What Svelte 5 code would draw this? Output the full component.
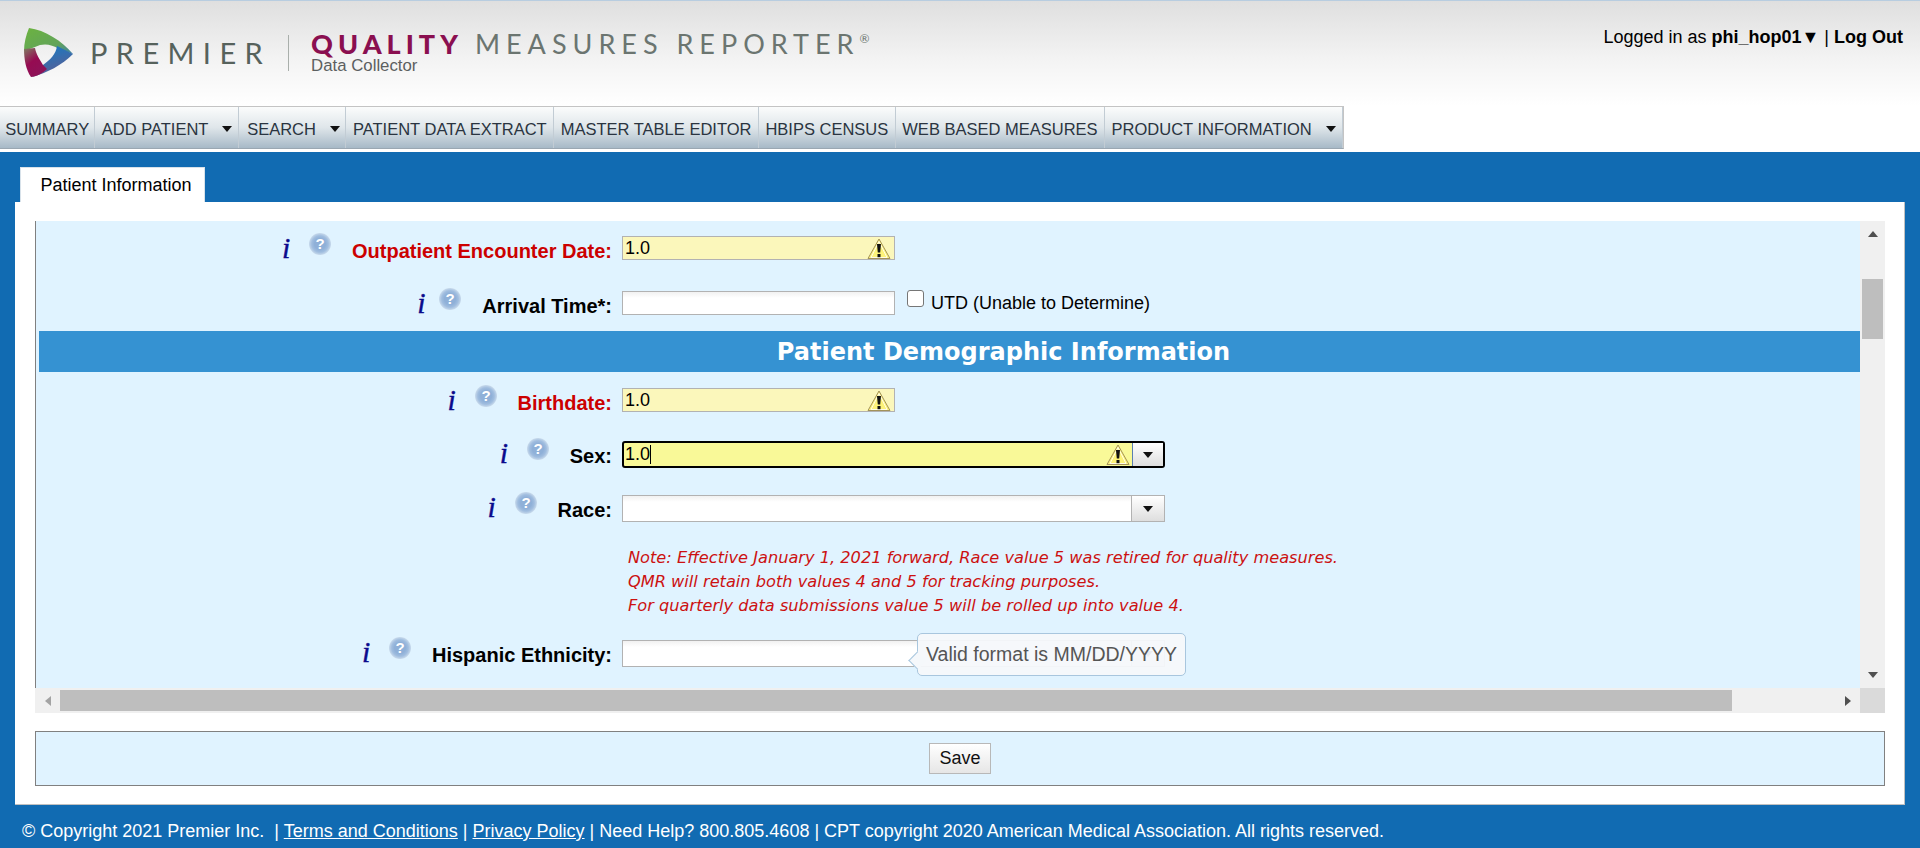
<script lang="ts">
	const menu = [
		{ label: 'SUMMARY', caret: false },
		{ label: 'ADD PATIENT', caret: true },
		{ label: 'SEARCH', caret: true },
		{ label: 'PATIENT DATA EXTRACT', caret: false },
		{ label: 'MASTER TABLE EDITOR', caret: false },
		{ label: 'HBIPS CENSUS', caret: false },
		{ label: 'WEB BASED MEASURES', caret: false },
		{ label: 'PRODUCT INFORMATION', caret: true }
	];
</script>

{#snippet warn()}
	<svg class="warn" width="24" height="21" viewBox="0 0 24 21" aria-hidden="true">
		<path d="M12 1 L23 20.5 H1 Z" fill="#fdf37a" stroke="#a3925a" stroke-width="1" />
		<path d="M12 3.5 L20 19.5 H4 Z" fill="none" stroke="#fffde8" stroke-width="1" />
		<path d="M10 6 H14 L13.2 14.5 H10.8 Z" fill="#111" />
		<rect x="10.5" y="16" width="3" height="3.2" fill="#111" />
	</svg>
{/snippet}

{#snippet labelCell(text, required, tight = false)}
	<div class="label-cell">
		<span class="info" class:tight>i</span>
		<svg class="help" width="22" height="22" viewBox="0 0 22 22" aria-hidden="true">
			<defs>
				<radialGradient id="helpRing">
					<stop offset="0.5" stop-color="#8fb0d8" />
					<stop offset="0.75" stop-color="#a0bddf" />
					<stop offset="1" stop-color="#c8daec" />
				</radialGradient>
			</defs>
			<circle cx="11" cy="11" r="11" fill="url(#helpRing)" />
			<text x="11" y="16" text-anchor="middle" class="help-mark">?</text>
		</svg>
		<label class:required>{text}</label>
	</div>
{/snippet}

{#snippet combo()}
	<span class="combo-btn"><i class="caret"></i></span>
{/snippet}

<div class="page">
	<header class="top">
		<div class="logo">
			<svg class="mark" width="52" height="54" viewBox="0 0 52 54" aria-hidden="true">
				<defs>
					<linearGradient id="gGreen" x1="0" y1="0" x2="1" y2="1">
						<stop offset="0" stop-color="#6cb33f" />
						<stop offset="0.65" stop-color="#62a45a" />
						<stop offset="1" stop-color="#3f7fa8" />
					</linearGradient>
					<linearGradient id="gBlue" x1="0" y1="0" x2="0.4" y2="1">
						<stop offset="0" stop-color="#0f7cc8" />
						<stop offset="1" stop-color="#5a5f95" />
					</linearGradient>
					<linearGradient id="gRed" x1="0" y1="0" x2="0.6" y2="1">
						<stop offset="0" stop-color="#7f7f62" />
						<stop offset="0.5" stop-color="#960b52" />
						<stop offset="1" stop-color="#8c1358" />
					</linearGradient>
				</defs>
				<path d="M6 1 C22 3 39 14 50 27 L36 22 C28 17 20 16 12 20 L1 24 C1 16 3 8 6 1 Z" fill="url(#gGreen)" />
				<path d="M50 27 C39 38 24 46 9 50 L20 38 C27 33 33 27 34 19 Z" fill="url(#gBlue)" />
				<path d="M1 22 C1 32 3 43 8 50 C13 50 20 46 24 42 L20 38 C17 33 13 27 12 21 Z" fill="url(#gRed)" />
			</svg>
			<span class="premier">PREMIER</span>
			<span class="divider"></span>
			<div class="product">
				<div class="product-name">
					<span class="quality">QUALITY</span>
					<span class="measures">MEASURES REPORTER<sup>®</sup></span>
				</div>
				<span class="collector">Data Collector</span>
			</div>
		</div>
		<div class="user">
			Logged in as <b>phi_hop01▼</b> | <b>Log Out</b>
		</div>
	</header>

	<nav class="menu">
		{#each menu as item}
			<span class="menu-item">
				{item.label}
				{#if item.caret}<i class="caret menu-caret"></i>{/if}
			</span>
		{/each}
	</nav>

	<main class="main">
		<div class="tab">Patient Information</div>
		<section class="panel">
			<div class="scroller">
				<div class="form">
					<div class="row gap-31">
						{@render labelCell('Outpatient Encounter Date:', true)}
						<div class="field warned short">1.0{@render warn()}</div>
					</div>
					<div class="row gap-16">
						{@render labelCell('Arrival Time*:', false, true)}
						<div class="with-check">
							<div class="field short"></div>
							<span class="check"></span>
							<span class="utd">UTD (Unable to Determine)</span>
						</div>
					</div>
					<h2 class="band">Patient Demographic Information</h2>
					<div class="row gap-29">
						{@render labelCell('Birthdate:', true)}
						<div class="field warned short">1.0{@render warn()}</div>
					</div>
					<div class="row gap-27">
						{@render labelCell('Sex:', false)}
						<div class="field long focused">1.0<span class="cursor"></span>{@render warn()}{@render combo()}</div>
					</div>
					<div class="row gap-23">
						{@render labelCell('Race:', false)}
						<div class="field long">{@render combo()}</div>
					</div>
					<div class="notes">
						<p>Note: Effective January 1, 2021 forward, Race value 5 was retired for quality measures.</p>
						<p>QMR will retain both values 4 and 5 for tracking purposes.</p>
						<p>For quarterly data submissions value 5 will be rolled up into value 4.</p>
					</div>
					<div class="row">
						{@render labelCell('Hispanic Ethnicity:', false)}
						<div class="field long">
							{@render combo()}
							<div class="tooltip">Valid format is MM/DD/YYYY</div>
						</div>
					</div>
				</div>

				<div class="vbar">
					<i class="arrow-up"></i>
					<span class="vthumb"></span>
					<i class="arrow-down"></i>
				</div>
				<div class="hbar">
					<span class="hbtn"><i class="arrow-left"></i></span>
					<span class="hthumb"></span>
					<i class="arrow-right"></i>
				</div>
				<div class="corner"></div>
			</div>

			<div class="actions">
				<button type="button" class="save">Save</button>
			</div>
		</section>

		<footer class="foot">
			© Copyright 2021 Premier Inc.&nbsp; | <a href="#terms">Terms and Conditions</a> | <a href="#privacy">Privacy Policy</a> | Need Help? 800.805.4608 | CPT copyright 2020 American Medical Association. All rights reserved.
		</footer>
	</main>
</div>

<style>
	:global(body) {
		margin: 0;
		font-family: 'Liberation Sans', Arial, sans-serif;
		font-size: 18px;
		color: #000;
	}

	.page {
		display: flex;
		flex-direction: column;
		height: 848px;
		overflow: hidden;
		background: #fff;
	}

	.top {
		display: flex;
		justify-content: space-between;
		height: 106px;
		box-sizing: border-box;
		border-top: 1px solid #b8cde0;
		background: linear-gradient(180deg, #dfdfdf 0%, #f3f3f3 55%, #ffffff 100%);
	}

	.logo {
		display: flex;
		align-items: flex-start;
		padding: 26px 0 0 23px;
	}

	.mark {
		filter: blur(0.5px);
		flex: none;
	}

	.premier {
		margin: 11px 0 0 15px;
		font-family: Lato, sans-serif;
		font-size: 29px;
		line-height: 30px;
		letter-spacing: 8.4px;
		color: #56625c;
	}

	.divider {
		width: 1px;
		height: 36px;
		margin: 8px 0 0 17px;
		background: #a9afab;
	}

	.product {
		display: flex;
		flex-direction: column;
		margin: 5px 0 0 22px;
	}

	.product-name {
		display: flex;
		gap: 12px;
		white-space: nowrap;
		line-height: 24px;
	}

	.quality {
		font-family: Lato, sans-serif;
		font-size: 27px;
		font-weight: 900;
		letter-spacing: 5px;
		color: #8a0f50;
	}

	.measures {
		font-family: Lato, sans-serif;
		font-size: 27px;
		letter-spacing: 6px;
		color: #6b7570;
	}

	.measures sup {
		font-size: 12px;
		line-height: 0;
		letter-spacing: 0;
		vertical-align: 11px;
	}

	.collector {
		margin-top: 2px;
		font-size: 16.8px;
		line-height: 16px;
		color: #5c5f60;
	}

	.user {
		padding: 26px 17px 0 0;
		line-height: 20px;
		white-space: nowrap;
	}

	.menu {
		display: flex;
		align-self: flex-start;
		height: 43px;
		box-sizing: border-box;
		margin-bottom: 3px;
		border: 1px solid #c4c4c4;
		border-bottom-color: #9aa7b2;
		border-left: none;
	}

	.menu-item {
		display: flex;
		align-items: center;
		padding: 3px 6.5px 0;
		border-right: 1px solid #c2ccd4;
		background: linear-gradient(180deg, #fbfcfc 0%, #dfe6ea 50%, #a7b9c7 100%);
		font-size: 16.5px;
		color: #2a3440;
		white-space: nowrap;
	}

	.menu-item:first-child {
		padding: 3px 5px 0 5.2px;
	}

	.menu-item:nth-child(3) {
		padding-left: 8.3px;
	}

	.menu-item:last-child {
		padding-right: 7.5px;
	}

	.caret {
		display: block;
		width: 0;
		height: 0;
		border-left: 5.5px solid transparent;
		border-right: 5.5px solid transparent;
		border-top: 6px solid #111;
	}

	.menu-caret {
		margin-left: 14px;
		margin-right: -1px;
	}

	.main {
		flex: 1;
		display: flex;
		flex-direction: column;
		padding: 15px 15px 0;
		background: #116bb2;
	}

	.tab {
		align-self: flex-start;
		box-sizing: border-box;
		width: 185px;
		height: 35px;
		margin-left: 5px;
		padding-left: 7px;
		line-height: 34px;
		text-align: center;
		background: #fff;
		border: 1px solid #d8e2ea;
		border-bottom: none;
	}

	.panel {
		box-sizing: border-box;
		height: 603px;
		padding: 19px 19px 0 20px;
		background: #fff;
		border-right: 1px solid #c0c0c0;
		border-bottom: 1px solid #c0c0c0;
	}

	.scroller {
		display: grid;
		grid-template-columns: 1fr 25px;
		grid-template-rows: 467px 25px;
	}

	.form {
		overflow: hidden;
		padding-top: 15px;
		box-sizing: border-box;
		background: #e0f3ff;
		border-left: 1px solid #808080;
	}

	.row {
		display: grid;
		grid-template-columns: 576px 1fr;
		column-gap: 10px;
		align-items: start;
	}

	.gap-31 {
		padding-bottom: 31px;
	}

	.gap-29 {
		padding-bottom: 29px;
	}

	.gap-27 {
		padding-bottom: 27px;
	}

	.gap-23 {
		padding-bottom: 23px;
	}

	.gap-16 {
		padding-bottom: 16px;
	}

	.label-cell {
		display: flex;
		justify-content: flex-end;
		align-items: flex-start;
		height: 24px;
	}

	.info {
		width: 10px;
		margin-right: 17px;
		font-family: 'Liberation Serif', serif;
		font-style: italic;
		font-size: 30px;
		line-height: 24px;
		color: #0a0a8c;
		-webkit-text-stroke: 0.4px #0a0a8c;
	}

	.info.tight {
		margin-right: 12px;
	}

	.help {
		margin: -3px 21px 0 0;
		flex: none;
	}

	.help-mark {
		font-family: 'Liberation Sans', sans-serif;
		font-size: 15px;
		font-weight: 700;
		fill: #fff;
	}

	label {
		margin-top: 3px;
		font-size: 20px;
		font-weight: 700;
		line-height: 24px;
		white-space: nowrap;
	}

	label.required {
		color: #cc0000;
	}

	.with-check {
		display: flex;
		align-items: flex-start;
	}

	.field {
		position: relative;
		display: flex;
		align-items: center;
		box-sizing: border-box;
		height: 24px;
		padding-left: 2px;
		border: 1px solid #b2b2b2;
		background: linear-gradient(180deg, #f1f1f1 0, #fff 6px);
		font-size: 18px;
	}

	.short {
		width: 273px;
	}

	.long {
		width: 543px;
		height: 27px;
	}

	.warned {
		background: #fbf7bb;
	}

	.focused {
		border: 2px solid #000;
		border-radius: 3px;
		padding-left: 1px;
		background: #f9f998;
	}

	.cursor {
		width: 1px;
		height: 19px;
		background: #000;
	}

	.warn {
		position: absolute;
		right: 3px;
		bottom: 0;
	}

	.focused .warn {
		right: 33px;
		bottom: 1px;
	}

	.combo-btn {
		position: absolute;
		top: 0;
		right: 0;
		bottom: 0;
		display: flex;
		align-items: center;
		justify-content: center;
		width: 32px;
		border-left: 1px solid #b2b2b2;
		background: linear-gradient(180deg, #fff 0%, #dedede 100%);
	}

	.focused .combo-btn {
		width: 30px;
		border-left-color: #5a7fb0;
	}

	.check {
		box-sizing: border-box;
		width: 17px;
		height: 17px;
		margin: -1px 7px 0 12px;
		border: 1px solid #767676;
		border-radius: 3px;
		background: #fff;
	}

	.utd {
		line-height: 24px;
		white-space: nowrap;
	}

	.band {
		height: 41px;
		margin: 0 0 16px 3px;
		padding-left: 108px;
		background: #3592d2;
		color: #fff;
		font-family: 'DejaVu Sans', Verdana, sans-serif;
		font-size: 24px;
		font-weight: 700;
		line-height: 43px;
		text-align: center;
	}

	.notes {
		margin-left: 592px;
		padding: 1px 0 22px;
		font-family: 'DejaVu Sans', Verdana, sans-serif;
		font-size: 16.2px;
		font-style: italic;
		line-height: 24px;
		color: #cc1111;
		white-space: nowrap;
	}

	.notes p {
		margin: 0;
	}

	.tooltip {
		position: absolute;
		top: -8px;
		left: 294px;
		box-sizing: border-box;
		width: 269px;
		height: 43px;
		border: 1px solid #a8c6de;
		border-radius: 5px;
		background: rgba(245, 248, 251, 0.95);
		color: #555;
		font-size: 19.5px;
		line-height: 41px;
		text-align: center;
		white-space: nowrap;
	}

	.tooltip::before {
		content: '';
		position: absolute;
		top: 20px;
		left: -7px;
		width: 12px;
		height: 12px;
		transform: rotate(45deg);
		border-left: 1px solid #a8c6de;
		border-bottom: 1px solid #a8c6de;
		background: #f5f8fb;
	}

	.vbar {
		display: flex;
		flex-direction: column;
		align-items: center;
		background: #f0f0f0;
	}

	.vthumb {
		width: 21px;
		height: 60px;
		margin-top: 42px;
		background: #bebebe;
	}

	.arrow-up,
	.arrow-down {
		width: 0;
		height: 0;
		border-left: 5.5px solid transparent;
		border-right: 5.5px solid transparent;
	}

	.arrow-up {
		margin-top: 10px;
		border-bottom: 6px solid #505050;
	}

	.arrow-down {
		margin-top: auto;
		margin-bottom: 10px;
		border-top: 6px solid #505050;
	}

	.hbar {
		display: flex;
		align-items: center;
		background: #f0f0f0;
	}

	.hbtn {
		display: flex;
		align-items: center;
		justify-content: center;
		width: 25px;
		flex: none;
	}

	.hthumb {
		width: 1672px;
		height: 21px;
		background: #bebebe;
	}

	.arrow-left,
	.arrow-right {
		width: 0;
		height: 0;
		border-top: 5.5px solid transparent;
		border-bottom: 5.5px solid transparent;
	}

	.arrow-left {
		border-right: 6px solid #a3a3a3;
	}

	.arrow-right {
		margin-left: auto;
		margin-right: 9px;
		border-left: 6px solid #505050;
	}

	.corner {
		background: #dadada;
	}

	.actions {
		display: flex;
		align-items: center;
		justify-content: center;
		box-sizing: border-box;
		height: 55px;
		margin-top: 18px;
		border: 1px solid #808080;
		background: #e0f3ff;
	}

	.save {
		width: 62px;
		height: 31px;
		padding: 0;
		border: 1px solid #b8b8b8;
		background: linear-gradient(180deg, #fff 0%, #e6e6e6 100%);
		font-family: 'Liberation Sans', Arial, sans-serif;
		font-size: 18px;
		color: #111;
	}

	.foot {
		padding: 16px 0 0 7px;
		color: #fff;
		line-height: 20px;
		white-space: nowrap;
	}

	.foot a {
		color: #fff;
	}
</style>
